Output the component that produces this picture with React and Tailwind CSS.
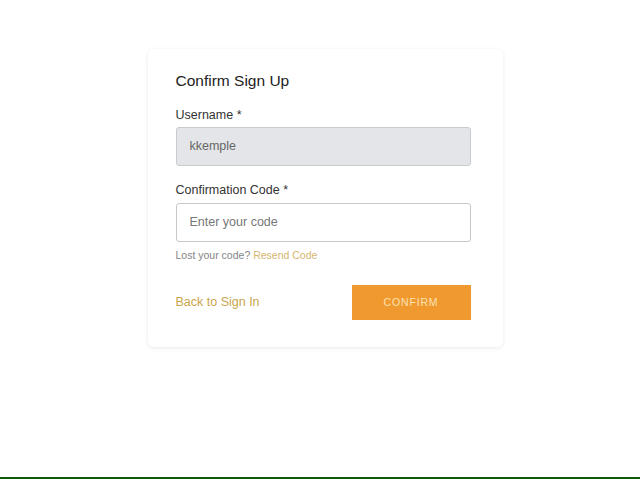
export default function App() {
  return (
    <div className="h-[479px] w-full bg-white flex flex-col font-['Liberation_Sans',Arial,sans-serif]">
      <div className="flex-1 flex justify-center items-start pt-[49px] pl-[10px]">
        {/* Confirm sign up card */}
        <div className="w-[355px] bg-white rounded-[6px] shadow-[0_1px_4px_rgba(0,0,0,0.09)] pl-[28px] pr-[32px] pt-[21px] pb-[27px]">
          <h2 className="text-[15.5px] leading-[22px] text-[#222]">Confirm Sign Up</h2>

          <div className="mt-[15px]">
            <label className="block text-[12.5px] leading-[16px] text-[#333]">Username *</label>
            <div className="mt-[4px] h-[39px] rounded-[3px] border border-[#c9cbce] bg-[#e4e5e8] flex items-center px-[13px] text-[12.5px] text-[#666]">
              kkemple
            </div>
          </div>

          <div className="mt-[16px]">
            <label className="block text-[12.5px] leading-[16px] text-[#333]">Confirmation Code *</label>
            <div className="mt-[5px] h-[39px] rounded-[3px] border border-[#c8c8c8] bg-white flex items-center px-[13px] text-[12.5px] text-[#777]">
              Enter your code
            </div>
          </div>

          <p className="mt-[6px] text-[10.5px] leading-[14px] text-[#858585]">
            Lost your code? <span className="text-[#d6b56e]">Resend Code</span>
          </p>

          <div className="mt-[23px] flex items-center justify-between">
            <span className="text-[12.5px] text-[#c9a54d]">Back to Sign In</span>
            <div className="w-[119px] h-[35px] bg-[#f0992f] flex items-center justify-center text-[10.5px] tracking-[0.08em] text-[#fbe3b4]">
              CONFIRM
            </div>
          </div>
        </div>
      </div>
      <div className="h-[2px] bg-[#0b5a0b]" />
    </div>
  );
}
